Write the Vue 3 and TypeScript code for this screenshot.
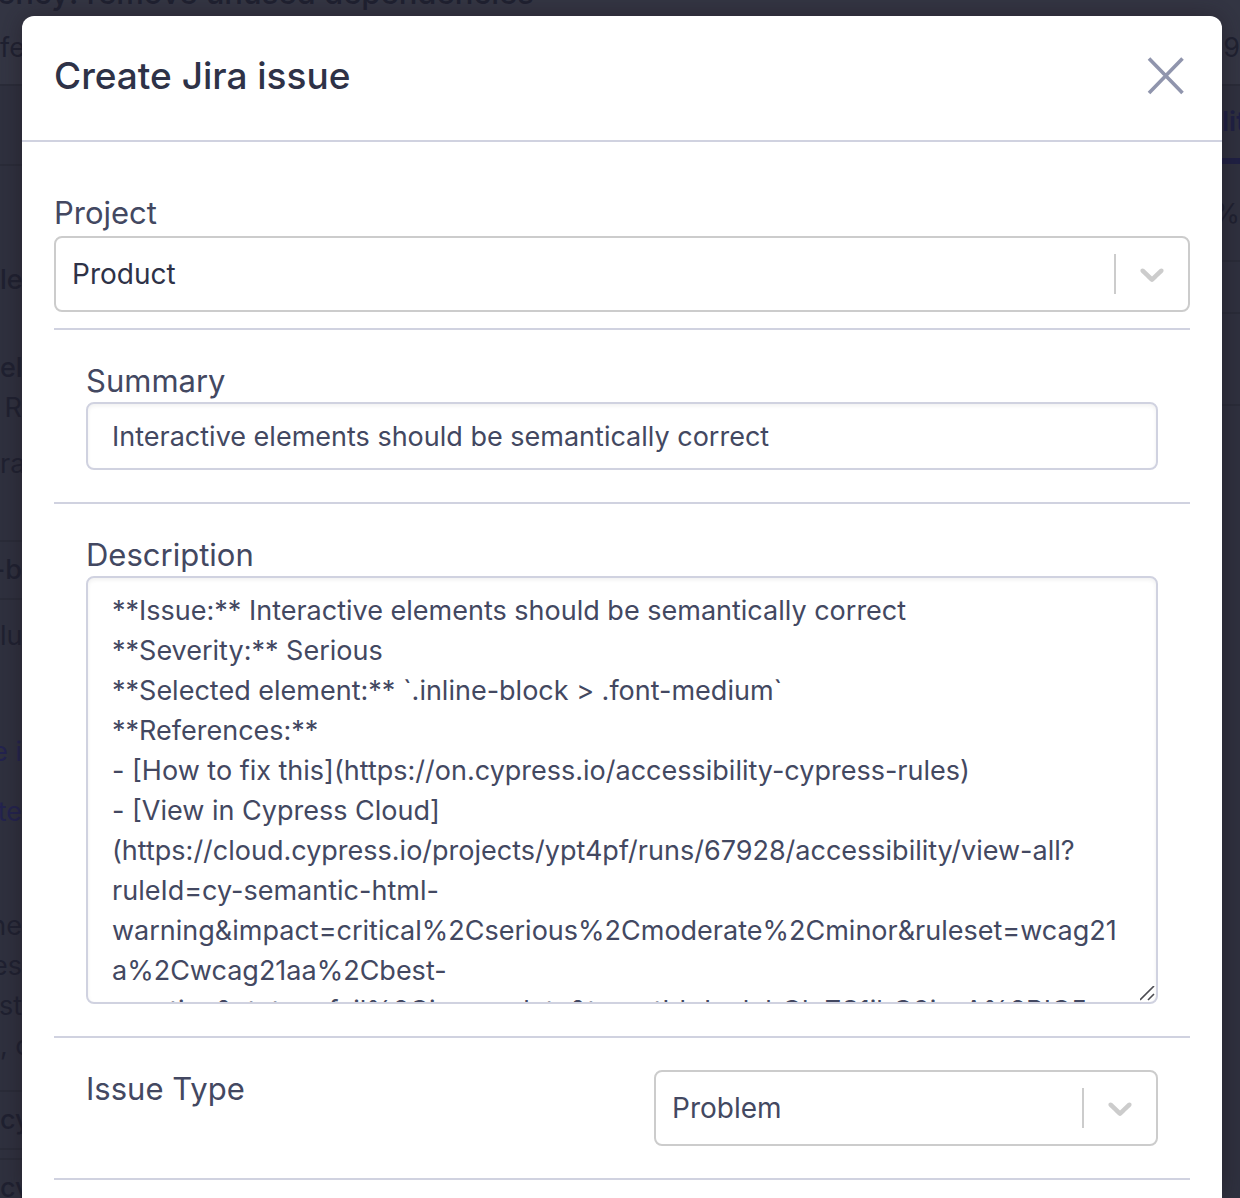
<script setup lang="ts">
import { ref } from 'vue'

interface Fragment {
  text?: string
  gap: number
  tone?: 'strong' | 'link' | 'tab'
  align?: 'end'
}

const summary = ref('Interactive elements should be semantically correct')
const project = ref('Product')
const issueType = ref('Problem')
const description = ref(
  [
    '**Issue:** Interactive elements should be semantically correct',
    '**Severity:** Serious',
    '**Selected element:** `.inline-block > .font-medium`',
    '**References:**',
    '- [How to fix this](https://on.cypress.io/accessibility-cypress-rules)',
    '- [View in Cypress Cloud](https://cloud.cypress.io/projects/ypt4pf/runs/67928/accessibility/view-all?ruleId=cy-semantic-html-warning&impact=critical%2Cserious%2Cmoderate%2Cminor&ruleset=wcag21a%2Cwcag21aa%2Cbest-practice&status=fail%2Cincomplete&targetId=LmlubGluZS1ibG9jayA%2BIC5',
  ].join('\n'),
)

// Parts of the run page that stay visible beside the dialog; a fragment without text is a rule.
const leftEdge: Fragment[] = [
  { text: 'fe', gap: 28 },
  { gap: 16 },
  { gap: 78 },
  { text: 'le', gap: 94, tone: 'strong' },
  { text: 'ele', gap: 48, tone: 'strong' },
  { text: 'R', gap: 0, align: 'end' },
  { text: 'rac', gap: 16 },
  { gap: 56 },
  { text: '-b', gap: 8, tone: 'strong', align: 'end' },
  { gap: 8 },
  { text: 'lu', gap: 16 },
  { text: 'e i', gap: 76, tone: 'link', align: 'end' },
  { text: 'te', gap: 20, tone: 'link', align: 'end' },
  { text: 'ne', gap: 74, align: 'end' },
  { text: 'es', gap: 0, align: 'end' },
  { text: 'st', gap: 0, align: 'end' },
  { text: ', c', gap: 0 },
  { gap: 24 },
  { text: 'cy', gap: 8, tone: 'strong' },
  { gap: 8 },
  { gap: 8 },
  { text: 'cy', gap: 8, tone: 'strong' },
]

const rightEdge: Fragment[] = [
  { text: '19', gap: 28, align: 'end' },
  { gap: 16 },
  { text: 'lit', gap: 16, tone: 'tab' },
  { text: '%', gap: 30, align: 'end' },
  { gap: 26 },
  { gap: 50 },
  { gap: 90 },
]
</script>

<template>
  <div class="screen">
    <div class="page" aria-hidden="true">
      <p class="page-title">ency: remove unused dependencies</p>
      <div class="edge edge-left">
        <div
          v-for="(item, i) in leftEdge"
          :key="i"
          :class="[item.text ? 'fragment' : 'rule', item.tone, item.align]"
          :style="{ marginTop: `${item.gap}px` }"
        >{{ item.text }}</div>
      </div>
      <div class="edge edge-right">
        <div
          v-for="(item, i) in rightEdge"
          :key="i"
          :class="[item.text ? 'fragment' : 'rule', item.tone, item.align]"
          :style="{ marginTop: `${item.gap}px` }"
        >{{ item.text }}</div>
      </div>
    </div>

    <section class="dialog" role="dialog" aria-modal="true" aria-labelledby="dialog-title">
      <header class="dialog-header">
        <h1 id="dialog-title">Create Jira issue</h1>
        <button class="close" type="button" aria-label="Close">
          <svg viewBox="0 0 40 40" width="40" height="40" fill="none" stroke="#9095ad" stroke-width="3.6">
            <path d="M3 2.5 L36.5 37 M36.5 2.5 L3 37" />
          </svg>
        </button>
      </header>

      <form class="dialog-body" @submit.prevent>
        <div class="project">
          <label for="project">Project</label>
          <div class="select-box">
            <select id="project" v-model="project" class="dark">
              <option>Product</option>
            </select>
            <span class="indicator">
              <svg viewBox="0 0 20 20" width="40" height="40" fill="#cccccc">
                <path d="M4.516 7.548c0.436-0.446 1.043-0.481 1.576 0l3.908 3.747 3.908-3.747c0.533-0.481 1.141-0.446 1.574 0 0.436 0.445 0.408 1.197 0 1.615-0.406 0.418-4.695 4.502-4.695 4.502-0.217 0.223-0.502 0.335-0.787 0.335s-0.57-0.112-0.789-0.335c0 0-4.287-4.084-4.695-4.502s-0.436-1.17 0-1.615z" />
              </svg>
            </span>
          </div>
        </div>

        <div class="field">
          <label for="summary">Summary</label>
          <input id="summary" v-model="summary" class="text-box" type="text" />
        </div>

        <div class="field">
          <label for="description">Description</label>
          <div class="area-box">
            <textarea id="description" v-model="description" class="text-box" spellcheck="false"></textarea>
            <svg class="grip" viewBox="0 0 16 16" width="16" height="16" fill="none" stroke="#4c4c52" stroke-width="1.6">
              <path d="M0 14 L14 0 M8 14 L14 8" />
            </svg>
          </div>
        </div>

        <div class="field split">
          <label for="issue-type">Issue Type</label>
          <div class="select-box">
            <select id="issue-type" v-model="issueType">
              <option>Problem</option>
            </select>
            <span class="indicator">
              <svg viewBox="0 0 20 20" width="40" height="40" fill="#cccccc">
                <path d="M4.516 7.548c0.436-0.446 1.043-0.481 1.576 0l3.908 3.747 3.908-3.747c0.533-0.481 1.141-0.446 1.574 0 0.436 0.445 0.408 1.197 0 1.615-0.406 0.418-4.695 4.502-4.695 4.502-0.217 0.223-0.502 0.335-0.787 0.335s-0.57-0.112-0.789-0.335c0 0-4.287-4.084-4.695-4.502s-0.436-1.17 0-1.615z" />
              </svg>
            </span>
          </div>
        </div>
      </form>
    </section>
  </div>
</template>

<style>
body {
  background: #2f313f;
}
</style>

<style scoped>
* {
  box-sizing: border-box;
}

.screen {
  position: relative;
  height: 100vh;
  padding: 16px 18px 0 22px;
  overflow: hidden;
  background: linear-gradient(#343644 0, #343644 84px, #2f313f 85px);
  color: #434861;
  font-family: Inter, 'Liberation Sans', sans-serif;
}

.page {
  position: absolute;
  inset: 0;
  color: #1f2131;
}

.page-title {
  position: absolute;
  top: -31px;
  left: 0;
  width: 534px;
  margin: 0;
  display: flex;
  justify-content: flex-end;
  font-size: 31px;
  font-weight: 500;
  line-height: 48px;
  white-space: nowrap;
}

.edge {
  position: absolute;
  top: 0;
  bottom: 0;
  width: 22px;
  overflow: hidden;
}

.edge-left {
  left: 0;
}

.edge-right {
  right: 0;
  width: 18px;
}

.fragment {
  display: flex;
  height: 40px;
  font-size: 27px;
  line-height: 40px;
  white-space: nowrap;
}

.rule {
  height: 2px;
  background: #2a2c39;
}

.end {
  justify-content: flex-end;
}

.strong {
  font-weight: 500;
}

.link {
  color: #23234f;
}

.tab {
  height: 62px;
  border-bottom: 6px solid #1f2044;
  color: #1f2044;
  font-weight: 600;
}

.dialog {
  position: relative;
  min-height: 100%;
  border-radius: 12px 12px 0 0;
  background: #ffffff;
  box-shadow: 0 0 24px rgba(30, 22, 30, 0.5);
}

.dialog-header {
  display: flex;
  align-items: center;
  justify-content: space-between;
  height: 126px;
  padding: 0 36px 4px 32px;
  border-bottom: 2px solid #d0d2e0;
}

h1 {
  margin: 0;
  color: #2e3247;
  font-size: 37px;
  font-weight: 500;
  line-height: 48px;
}

.close {
  display: flex;
  padding: 0;
  border: 0;
  background: none;
}

.dialog-body {
  padding: 52px 32px 0;
}

label {
  display: block;
  margin-bottom: 2px;
  font-size: 31px;
  line-height: 38px;
}

.project {
  display: flex;
  flex-direction: column;
  gap: 2px;
  padding-bottom: 16px;
  border-bottom: 2px solid #d0d2e0;
}

.field {
  padding: 32px;
  border-bottom: 2px solid #d0d2e0;
}

.split {
  display: grid;
  grid-template-columns: 1fr 1fr;
  gap: 64px;
}

.select-box {
  position: relative;
  height: 76px;
}

select {
  width: 100%;
  height: 100%;
  padding: 0 88px 0 16px;
  appearance: none;
  border: 2px solid #cccccc;
  border-radius: 8px;
  background: #ffffff;
  color: #434861;
  font: 28px/40px Inter, 'Liberation Sans', sans-serif;
}

select.dark {
  color: #2e3247;
}

.indicator {
  position: absolute;
  top: 18px;
  right: 2px;
  display: flex;
  padding: 0 16px;
  border-left: 2px solid #cccccc;
  pointer-events: none;
}

.text-box {
  display: block;
  width: 100%;
  border: 2px solid #d0d2e0;
  border-radius: 8px;
  outline: none;
  background: #ffffff;
  box-shadow: inset 0 2px 4px rgba(0, 0, 0, 0.06);
  color: #434861;
  font: 27px/40px Inter, 'Liberation Sans', sans-serif;
}

input.text-box {
  height: 68px;
  padding: 0 24px;
}

.area-box {
  position: relative;
}

textarea.text-box {
  height: 428px;
  padding: 13px 32px 12px 24px;
  overflow: hidden;
  resize: none;
}

.grip {
  position: absolute;
  right: 2px;
  bottom: 2px;
  pointer-events: none;
}
</style>
